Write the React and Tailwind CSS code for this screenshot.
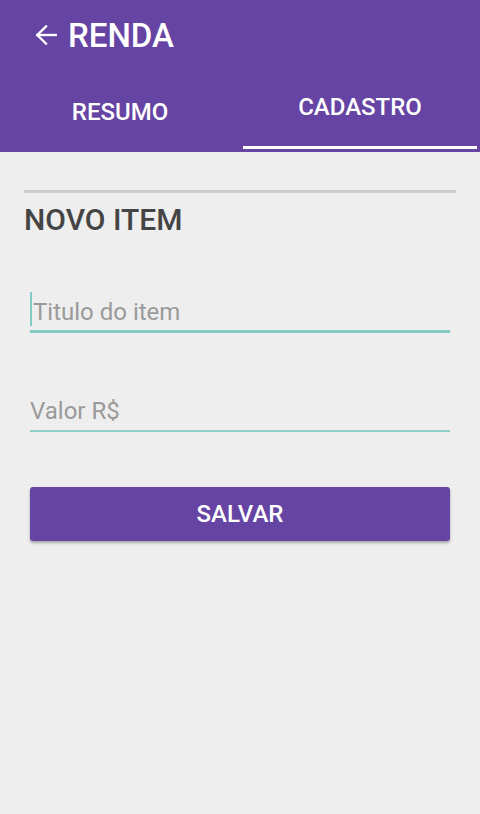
import React from "react";

export default function App() {
  return (
    <div className="w-[480px] h-[814px] bg-[#eeeeee] flex flex-col" style={{ fontFamily: "Roboto, 'Liberation Sans', sans-serif" }}>
      <div className="bg-[#6644a4] h-[152px] flex flex-col">
        <div className="h-[70px] flex items-center pl-[33px] gap-[9px]">
          <svg width="26" height="26" viewBox="0 0 24 24" fill="none" stroke="white" strokeWidth="2.2" strokeLinecap="square">
            <path d="M21 12H4" />
            <path d="M12 4l-8 8 8 8" />
          </svg>
          <span className="text-white text-[33px] font-medium leading-none">RENDA</span>
        </div>
        <div className="flex flex-1">
          <div className="flex-1 flex justify-center pt-[30px]">
            <span className="text-white text-[24px] font-medium leading-none">RESUMO</span>
          </div>
          <div className="flex-1 flex flex-col items-center pt-[25px]">
            <span className="text-white text-[24px] font-medium leading-none">CADASTRO</span>
            <div className="mt-auto mb-[3px] w-[234px] h-[3px] bg-white" />
          </div>
        </div>
      </div>
      <div className="px-[24px] pt-[38px]">
        <div className="h-[3px] bg-[#cccccc]" />
        <div className="mt-[12px] text-[30px] font-medium text-[#444444] leading-none">NOVO ITEM</div>
      </div>
      <div className="px-[30px] mt-[57px]">
        <div className="relative h-[41px] border-b-[3px] border-[#80cbc4] flex items-end pb-[6px]">
          <div className="absolute left-0 top-[0px] w-[2px] h-[34px] bg-[#80cbc4]" />
          <span className="pl-[3px] text-[24px] text-[#9a9a9a] leading-none">Titulo do item</span>
        </div>
        <div className="mt-[57px] h-[42px] border-b-2 border-[#8fcfc8] flex items-end pb-[7px]">
          <span className="text-[24px] text-[#9a9a9a] leading-none">Valor R$</span>
        </div>
        <button className="mt-[55px] w-full h-[54px] bg-[#6644a4] rounded-[3px] shadow-[0_2px_3px_rgba(0,0,0,0.3)] text-white text-[24px] font-medium flex items-center justify-center">
          SALVAR
        </button>
      </div>
    </div>
  );
}
